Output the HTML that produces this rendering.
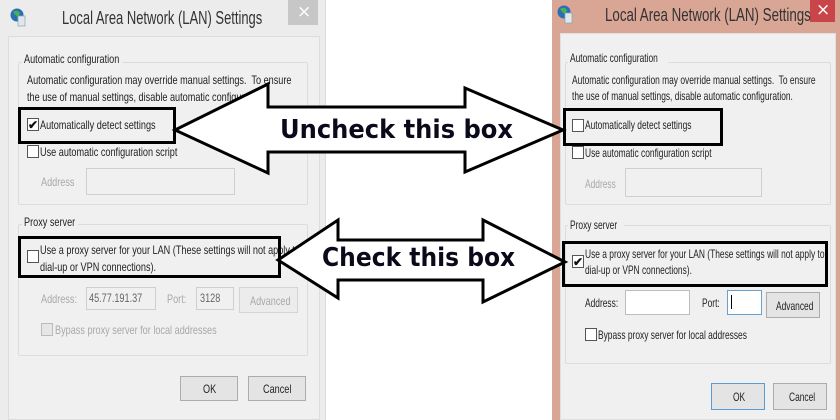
<!DOCTYPE html>
<html><head><meta charset="utf-8"><style>
*{margin:0;padding:0;box-sizing:border-box}
body{width:840px;height:420px;overflow:hidden;background:#fff;position:relative;font-family:"Liberation Sans",sans-serif;}
.a{position:absolute}
.t{position:absolute;white-space:nowrap;font-size:12px;color:#222;transform:scaleX(.76);transform-origin:0 0;line-height:14px}
.r{transform:scaleX(.70)}
.g{color:#a8a8a8}
.cb{position:absolute;width:12px;height:13px;border:1px solid #555;background:#fff}
.cbg{border-color:#bbb;background:#e6e6e6}
.in{position:absolute;border:1px solid #cfcfcf;background:#f0f0f0}
.btn{position:absolute;border:1px solid #acacac;background:#e4e4e4}
.grp{position:absolute;border:1px solid #dcdcdc;border-radius:2px}
.box{position:absolute;border:3px solid #000}
.chk{position:absolute;font-size:12px;line-height:12px;font-weight:bold;color:#111}
.x{position:absolute;color:#fff;font-size:17px;line-height:18px;font-family:"DejaVu Sans",sans-serif}
</style></head><body>
<!-- left dialog -->
<div class="a" style="left:0;top:0;width:326px;height:420px;background:#ececec;border-right:1px solid #dcdcdc"></div>
<div class="a" style="left:8px;top:36px;width:312px;height:384px;background:#f0f0f0;border:1px solid #dddddd"></div>
<div class="a" style="left:288px;top:0;width:30px;height:25px;background:#c7c7c7"></div>
<div class="x" style="left:297px;top:3px">×</div>
<svg class="a" style="left:10px;top:7px" width="16" height="20"><circle cx="7" cy="8" r="6.5" fill="#2a6fb5"/><path d="M3 5 Q7 2 10 6 L8 10 Q5 8 3 5Z" fill="#4caf50"/><rect x="8" y="9" width="7" height="10" fill="#dfe6ee" stroke="#8aa" stroke-width=".7"/></svg>
<div class="t" style="left:62px;top:8px;font-size:18px;line-height:20px;color:#333;transform:scaleX(.72)">Local Area Network (LAN) Settings</div>
<div class="grp" style="left:18px;top:62px;width:290px;height:143px"></div>
<div class="a" style="left:22px;top:55px;width:100px;height:12px;background:#f0f0f0"></div>
<div class="t" style="left:24px;top:52px">Automatic configuration</div>
<div class="t" style="left:27px;top:73px">Automatic configuration may override manual settings.&nbsp; To ensure</div>
<div class="t" style="left:27px;top:90px">the use of manual settings, disable automatic configuration.</div>
<div class="cb" style="left:27px;top:118px"></div><div class="chk" style="left:28px;top:119px">✔</div>
<div class="t" style="left:40px;top:118px">Automatically detect settings</div>
<div class="cb" style="left:27px;top:145px"></div>
<div class="t" style="left:40px;top:145px">Use automatic configuration script</div>
<div class="t g" style="left:41px;top:175px">Address</div>
<div class="in" style="left:86px;top:168px;width:149px;height:27px"></div>
<div class="grp" style="left:18px;top:224px;width:290px;height:132px"></div>
<div class="a" style="left:22px;top:217px;width:56px;height:12px;background:#f0f0f0"></div>
<div class="t" style="left:24px;top:215px">Proxy server</div>
<div class="cb" style="left:27px;top:250px"></div>
<div class="t" style="left:40px;top:243px">Use a proxy server for your LAN (These settings will not apply to</div>
<div class="t" style="left:40px;top:260px">dial-up or VPN connections).</div>
<div class="t g" style="left:41px;top:292px">Address:</div>
<div class="in" style="left:86px;top:287px;width:70px;height:23px"></div>
<div class="t" style="left:89px;top:291px;color:#666">45.77.191.37</div>
<div class="t g" style="left:167px;top:292px">Port:</div>
<div class="in" style="left:196px;top:287px;width:38px;height:23px"></div>
<div class="t" style="left:200px;top:291px;color:#666">3128</div>
<div class="btn" style="left:239px;top:287px;width:59px;height:26px;background:#ececec;border-color:#d4d4d4"></div>
<div class="t g" style="left:250px;top:294px">Advanced</div>
<div class="cb cbg" style="left:41px;top:323px"></div>
<div class="t g" style="left:55px;top:323px">Bypass proxy server for local addresses</div>
<div class="btn" style="left:180px;top:376px;width:58px;height:25px"></div>
<div class="t" style="left:203px;top:382px">OK</div>
<div class="btn" style="left:248px;top:376px;width:58px;height:25px"></div>
<div class="t" style="left:263px;top:382px">Cancel</div>
<div class="box" style="left:18px;top:107px;width:158px;height:37px"></div>
<div class="box" style="left:18px;top:236px;width:263px;height:42px"></div>

<!-- right dialog -->
<div class="a" style="left:552px;top:0;width:288px;height:420px;background:#d9a595"></div>
<div class="a" style="left:560px;top:33px;width:276px;height:387px;background:#f0f0f0;border:1px solid #e0e0e0"></div>
<div class="a" style="left:810px;top:0;width:25px;height:22px;background:#c8454a"></div>
<div class="x" style="left:816px;top:1px">×</div>
<svg class="a" style="left:557px;top:4px" width="16" height="20"><circle cx="7" cy="8" r="6.5" fill="#2a6fb5"/><path d="M3 5 Q7 2 10 6 L8 10 Q5 8 3 5Z" fill="#4caf50"/><rect x="8" y="9" width="7" height="10" fill="#dfe6ee" stroke="#8aa" stroke-width=".7"/></svg>
<div class="t" style="left:605px;top:5px;font-size:18px;line-height:20px;color:#333;transform:scaleX(.74)">Local Area Network (LAN) Settings</div>
<div class="grp" style="left:565px;top:62px;width:266px;height:143px"></div>
<div class="a" style="left:568px;top:55px;width:100px;height:12px;background:#f0f0f0"></div>
<div class="t r" style="left:570px;top:51px">Automatic configuration</div>
<div class="t r" style="left:572px;top:73px">Automatic configuration may override manual settings.&nbsp; To ensure</div>
<div class="t r" style="left:572px;top:89px">the use of manual settings, disable automatic configuration.</div>
<div class="cb" style="left:572px;top:119px"></div>
<div class="t r" style="left:585px;top:118px">Automatically detect settings</div>
<div class="cb" style="left:572px;top:146px"></div>
<div class="t r" style="left:585px;top:146px">Use automatic configuration script</div>
<div class="t r g" style="left:585px;top:177px">Address</div>
<div class="in" style="left:625px;top:168px;width:137px;height:29px"></div>
<div class="grp" style="left:565px;top:225px;width:266px;height:139px"></div>
<div class="a" style="left:568px;top:219px;width:56px;height:12px;background:#f0f0f0"></div>
<div class="t r" style="left:570px;top:218px">Proxy server</div>
<div class="cb" style="left:572px;top:255px"></div><div class="chk" style="left:573px;top:256px">✔</div>
<div class="t r" style="left:585px;top:247px">Use a proxy server for your LAN (These settings will not apply to</div>
<div class="t r" style="left:585px;top:263px">dial-up or VPN connections).</div>
<div class="t r" style="left:585px;top:296px">Address:</div>
<div class="in" style="left:625px;top:290px;width:65px;height:25px;background:#fff;border-color:#bdbdbd"></div>
<div class="t r" style="left:702px;top:296px">Port:</div>
<div class="in" style="left:727px;top:290px;width:35px;height:25px;background:#fff;border-color:#6aa0d0"></div>
<div class="a" style="left:731px;top:295px;width:1px;height:14px;background:#000"></div>
<div class="btn" style="left:766px;top:292px;width:54px;height:26px"></div>
<div class="t r" style="left:776px;top:299px">Advanced</div>
<div class="cb" style="left:585px;top:328px"></div>
<div class="t r" style="left:598px;top:328px">Bypass proxy server for local addresses</div>
<div class="btn" style="left:711px;top:383px;width:54px;height:27px;border-color:#5a9bd5"></div>
<div class="t r" style="left:733px;top:390px">OK</div>
<div class="btn" style="left:773px;top:383px;width:54px;height:27px"></div>
<div class="t r" style="left:789px;top:390px">Cancel</div>
<div class="box" style="left:563px;top:108px;width:160px;height:38px"></div>
<div class="box" style="left:562px;top:241px;width:266px;height:46px"></div>

<!-- arrows -->
<svg class="a" style="left:0;top:0" width="840" height="420">
<path d="M175 130 L268 84 L268 107 L465 107 L465 88 L563 130 L465 172 L465 152 L268 152 L268 173 Z" fill="#fff" stroke="#000" stroke-width="3" stroke-linejoin="miter"/>
<path d="M278 260 L338 220 L338 240 L483 240 L483 220 L565 262 L483 302 L483 280 L338 280 L338 298 Z" fill="#fff" stroke="#000" stroke-width="3"/>
</svg>
<div class="t" style="left:280px;top:115px;font-family:'DejaVu Sans',sans-serif;font-weight:bold;font-size:26px;line-height:30px;color:#0a0a1a;transform:scaleX(.93)">Uncheck this box</div>
<div class="t" style="left:322px;top:243px;font-family:'DejaVu Sans',sans-serif;font-weight:bold;font-size:26px;line-height:30px;color:#0a0a1a;transform:scaleX(.9)">Check this box</div>
</body></html>
